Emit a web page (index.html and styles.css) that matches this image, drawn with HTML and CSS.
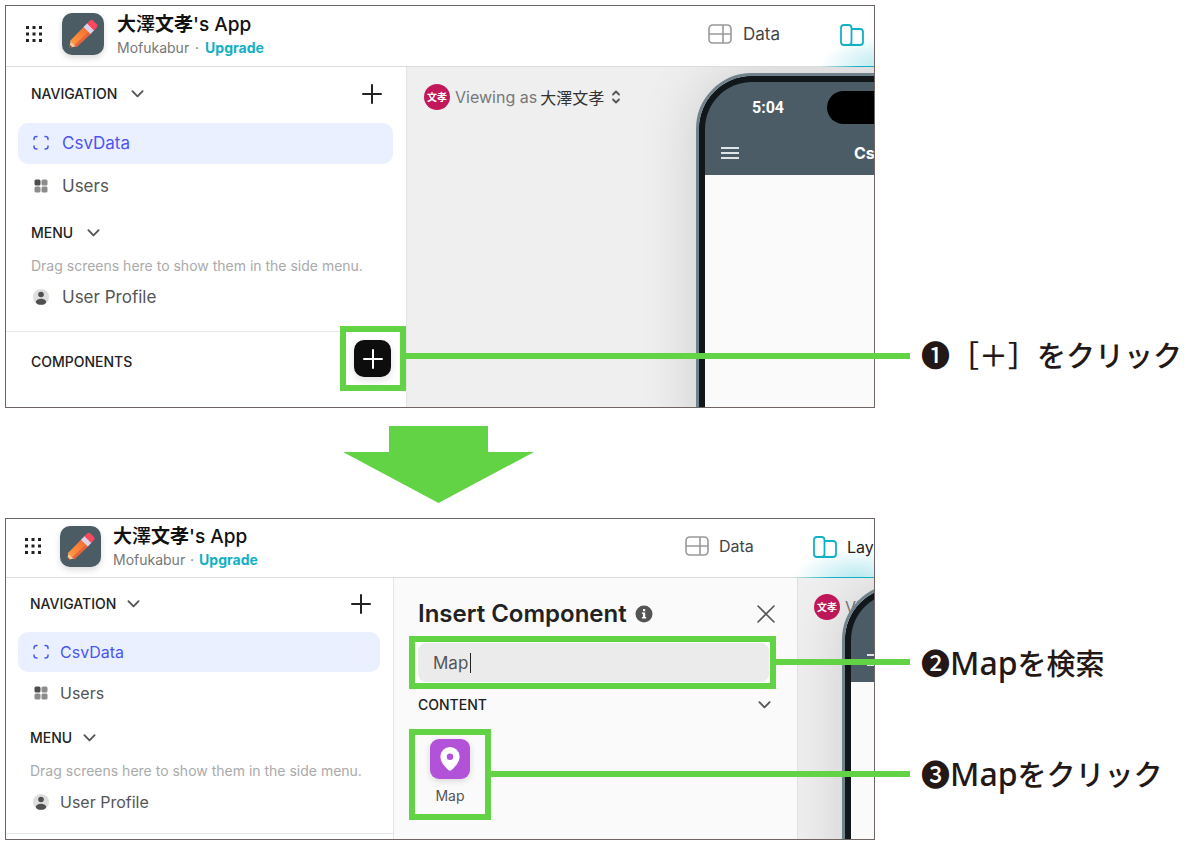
FILE: index.html
```
<!DOCTYPE html>
<html lang="ja">
<head>
<meta charset="UTF-8" />
<meta name="viewport" content="width=device-width, initial-scale=1" />
<title>Insert a Map component</title>
<link rel="stylesheet" href="styles.css">
</head>
<body>

<!-- Shared icons -->
<svg class="sprite" aria-hidden="true">
  <defs>
    <linearGradient id="pencilBody" x1="0" y1="1" x2="1" y2="0">
      <stop offset="0" stop-color="#ffa047" />
      <stop offset="1" stop-color="#f2662c" />
    </linearGradient>
  </defs>
  <symbol id="dots" viewBox="0 0 18 18">
    <path fill="#222" d="M1 1h3v3H1zM7.500 1h3v3h-3zM14 1h3v3h-3zM1 7.500h3v3H1zM7.500 7.500h3v3h-3zM14 7.500h3v3h-3zM1 14h3v3H1zM7.500 14h3v3h-3zM14 14h3v3h-3z" />
  </symbol>
  <symbol id="pencil" viewBox="0 0 42 42">
    <path fill="#f9c39b" d="M7 35l2-8 6 6z" />
    <path fill="url(#pencilBody)" d="M8 28L22.500 13l7 7L14.500 34z" />
    <path fill="#e9633a" d="M12.500 32L27.500 18l2 2L14.500 34z" />
    <path fill="#7a3d33" d="M7 35l.8-3.200 2.400 2.400z" />
    <path fill="#dcd3ea" d="M21.500 14l4-4 7 7-4 4z" />
    <path fill="#f8485e" d="M25 10.500l3-3q1.500-1.300 3 0l3.800 3.800q1.300 1.500 0 3L32 17.500z" />
  </symbol>
  <symbol id="chevron" viewBox="0 0 14 10">
    <path fill="none" stroke="#555" stroke-width="2" stroke-linecap="round" stroke-linejoin="round" d="M1.500 2L7 7.500 12.500 2" />
  </symbol>
  <symbol id="plus" viewBox="0 0 20 20">
    <path fill="none" stroke="currentColor" stroke-width="2" stroke-linecap="round" d="M10 1v18M1 10h18" />
  </symbol>
  <symbol id="brackets" viewBox="0 0 16 16">
    <path fill="none" stroke="#4a5cf0" stroke-width="1.500" stroke-linecap="round" d="M1 4.500V4q0-2.500 2.500-2.500H4M12 1.500h.5Q15 1.500 15 4v.5M15 11v.5q0 2.500-2.500 2.500H12M4 14h-.5Q1 14 1 11.500V11" />
  </symbol>
  <symbol id="tiles" viewBox="0 0 16 16">
    <rect x="1.500" y="1.500" width="6" height="6" rx="1.500" fill="#4d4d4d" />
    <rect x="8.500" y="1.500" width="6" height="6" rx="1.500" fill="#8c8c8c" />
    <rect x="1.500" y="8.500" width="6" height="6" rx="1.500" fill="#8c8c8c" />
    <rect x="8.500" y="8.500" width="6" height="6" rx="1.500" fill="#8c8c8c" />
  </symbol>
  <symbol id="person" viewBox="0 0 16 16">
    <circle cx="8" cy="8" r="8" fill="#dedede" />
    <circle cx="8" cy="5.500" r="2.800" fill="#505050" />
    <ellipse cx="8" cy="12.800" rx="5.200" ry="3" fill="#505050" />
  </symbol>
  <symbol id="table" viewBox="0 0 24 20">
    <path fill="none" stroke="#999" stroke-width="1.600" d="M5 1h14q4 0 4 4v10q0 4-4 4H5q-4 0-4-4V5q0-4 4-4zM1 10h22M15 1v18" />
  </symbol>
  <symbol id="layout" viewBox="0 0 24 22">
    <path fill="none" stroke="#12b0c4" stroke-width="1.800" d="M4 1h4.500q3 0 3 3v14q0 3-3 3H4q-3 0-3-3V4q0-3 3-3zM11.500 5h8.500q3 0 3 3v10q0 3-3 3H8" />
  </symbol>
  <symbol id="updown" viewBox="0 0 10 14">
    <path fill="none" stroke="#555" stroke-width="1.800" stroke-linecap="round" stroke-linejoin="round" d="M2 4.500l3-3 3 3M2 9.500l3 3 3-3" />
  </symbol>
  <symbol id="burger" viewBox="0 0 18 12">
    <path stroke="#dfe4e6" stroke-width="2" d="M0 1h18M0 6h18M0 11h18" />
  </symbol>
  <symbol id="info" viewBox="0 0 18 18">
    <circle cx="9" cy="9" r="8.500" fill="#555" />
    <path fill="#fff" d="M8 4h2.200v2.200H8zM7 7.500h3.200v4.500h1v1.500H7V12h1V9H7z" />
  </symbol>
  <symbol id="close" viewBox="0 0 18 18">
    <path stroke="#555" stroke-width="1.600" stroke-linecap="round" d="M1 1l16 16M17 1L1 17" />
  </symbol>
  <symbol id="pin" viewBox="0 0 20 24">
    <path fill="#fff" fill-rule="evenodd" d="M10 0a9.600 9.600 0 0 1 9.600 9.600c0 6-5 10.500-8 13.500q-1.600 1.300-3.200 0c-3-3-8-7.500-8-13.500A9.600 9.600 0 0 1 10 0zM10 6.500a3.200 3.200 0 1 0 0 6.400 3.200 3.200 0 0 0 0-6.400z" />
  </symbol>
</svg>

<main>
  <!-- Step 1 -->
  <section class="step">
    <div class="shot shot-one">
      <header class="topbar">
        <div class="brand">
          <svg class="dots"><use href="#dots" /></svg>
          <span class="logo"><svg><use href="#pencil" /></svg></span>
          <div class="brand-text">
            <div class="app-name"><b>大</b>澤<b>文孝</b>'s App</div>
            <div class="plan">Mofukabur <i>·</i> <a href="#upgrade">Upgrade</a></div>
          </div>
        </div>
        <nav class="tabs">
          <a href="#data" class="tab"><svg><use href="#table" /></svg>Data</a>
          <a href="#layout" class="tab current" aria-label="Layout"><svg><use href="#layout" /></svg></a>
        </nav>
      </header>
      <div class="workspace">
        <aside class="sidebar">
          <div class="side-head first">NAVIGATION <svg class="chev"><use href="#chevron" /></svg>
            <button class="add" aria-label="Add screen"><svg><use href="#plus" /></svg></button>
          </div>
          <a href="#csvdata" class="item active"><svg><use href="#brackets" /></svg>CsvData</a>
          <a href="#users" class="item"><svg><use href="#tiles" /></svg>Users</a>
          <div class="side-head">MENU <svg class="chev"><use href="#chevron" /></svg></div>
          <p class="hint">Drag screens here to show them in the side menu.</p>
          <a href="#profile" class="item"><svg><use href="#person" /></svg>User Profile</a>
          <div class="components">
            <span>COMPONENTS</span>
            <div class="mark mark-plus">
              <button class="insert" aria-label="Insert component"><svg><use href="#plus" /></svg></button>
            </div>
          </div>
        </aside>
        <div class="canvas">
          <div class="viewer"><span class="avatar">文孝</span>Viewing as <b>大澤文孝</b><svg><use href="#updown" /></svg></div>
          <div class="phone">
            <div class="phone-bar">
              <span class="clock">5:04</span>
              <span class="island"></span>
              <svg class="burger"><use href="#burger" /></svg>
              <span class="screen-name">CsvData</span>
            </div>
          </div>
        </div>
      </div>
    </div>
    <div class="notes">
      <p class="note note-one">❶［＋］をクリック</p>
    </div>
    <div class="lead lead-one"></div>
  </section>

  <svg class="arrow" viewBox="0 0 191 77" aria-hidden="true">
    <path fill="#61d345" d="M46 0h99v26h46L95.500 77 0 26h46z" />
  </svg>

  <!-- Steps 2 and 3 -->
  <section class="step">
    <div class="shot shot-two">
      <header class="topbar">
        <div class="brand">
          <svg class="dots"><use href="#dots" /></svg>
          <span class="logo"><svg><use href="#pencil" /></svg></span>
          <div class="brand-text">
            <div class="app-name"><b>大</b>澤<b>文孝</b>'s App</div>
            <div class="plan">Mofukabur <i>·</i> <a href="#upgrade">Upgrade</a></div>
          </div>
        </div>
        <nav class="tabs">
          <a href="#data" class="tab"><svg><use href="#table" /></svg>Data</a>
          <a href="#layout" class="tab current"><svg><use href="#layout" /></svg>Layout</a>
        </nav>
      </header>
      <div class="workspace">
        <aside class="sidebar">
          <div class="side-head first">NAVIGATION <svg class="chev"><use href="#chevron" /></svg>
            <button class="add" aria-label="Add screen"><svg><use href="#plus" /></svg></button>
          </div>
          <a href="#csvdata" class="item active"><svg><use href="#brackets" /></svg>CsvData</a>
          <a href="#users" class="item"><svg><use href="#tiles" /></svg>Users</a>
          <div class="side-head">MENU <svg class="chev"><use href="#chevron" /></svg></div>
          <p class="hint">Drag screens here to show them in the side menu.</p>
          <a href="#profile" class="item"><svg><use href="#person" /></svg>User Profile</a>
          <div class="components"></div>
        </aside>
        <div class="panel">
          <div class="panel-head">
            <h2>Insert Component</h2>
            <svg class="info"><use href="#info" /></svg>
            <button class="close" aria-label="Close"><svg><use href="#close" /></svg></button>
          </div>
          <div class="mark mark-search">
            <input type="text" value="Map" aria-label="Search components">
            <span class="caret"></span>
          </div>
          <div class="group">CONTENT <svg class="chev"><use href="#chevron" /></svg></div>
          <div class="mark mark-map">
            <button class="tile"><span class="tile-icon"><svg><use href="#pin" /></svg></span>Map</button>
          </div>
        </div>
        <div class="canvas">
          <div class="viewer"><span class="avatar">文孝</span>Viewing as</div>
          <div class="phone">
            <div class="phone-bar">
              <svg class="burger"><use href="#burger" /></svg>
            </div>
          </div>
        </div>
      </div>
    </div>
    <div class="notes">
      <p class="note note-two">❷<span>Map</span>を検索</p>
      <p class="note note-three">❸<span>Map</span>をクリック</p>
    </div>
    <div class="lead lead-two"></div>
    <div class="lead lead-three"></div>
  </section>
</main>

</body>
</html>
```
FILE: styles.css
```
* {
  box-sizing: border-box;
}
body {
  margin: 0;
  background: #fff;
  font-family: Inter, "Noto Sans CJK JP", sans-serif;
  color: #222;
}
.sprite {
  position: absolute;
  width: 0;
  height: 0;
}
main {
  padding: 5px 0 5px 5px;
}
a {
  color: inherit;
  text-decoration: none;
}
button {
  padding: 0;
  border: none;
  background: none;
  color: inherit;
  font: inherit;
  cursor: pointer;
}
svg {
  display: block;
  flex-shrink: 0;
}

/* One step: screenshot on the left, notes on the right */
.step {
  position: relative;
  display: grid;
  grid-template-columns: minmax(0, 1fr) 325px;
}
.shot {
  display: flex;
  flex-direction: column;
  border: 1px solid #6f6663;
  background: #fff;
  overflow: hidden;
  white-space: nowrap;
}
.shot-one {
  --logo: 42px;
  --row: 41px;
  --bar: 61px;
  --item-text: 17px;
  min-height: 403px;
}
.shot-two {
  --logo: 41px;
  --row: 40px;
  --bar: 59px;
  --item-text: 16px;
  min-height: 322px;
}

/* Top bar */
.topbar {
  display: flex;
  height: var(--bar);
  border-bottom: 1px solid #dcdcdc;
}
.brand {
  display: flex;
  align-items: center;
  flex: 0 0 682px;
  padding-left: 19px;
  padding-bottom: 4px;
}
.shot-two .brand {
  flex-basis: 659px;
  padding-left: 18px;
}
.dots {
  width: 18px;
  height: 18px;
}
.logo {
  width: var(--logo);
  height: var(--logo);
  margin: 0 13px 0 19px;
  border-radius: 10px;
  background: #4b5c65;
  box-shadow: 0 3px 6px rgba(0,0,0,0.14);
}
.shot-two .logo {
  margin-left: 18px;
  margin-right: 12px;
}
.logo svg {
  width: 100%;
  height: 100%;
}
.brand-text {
  padding-top: 4px;
}
.app-name {
  font-size: 19px;
  line-height: 24px;
  font-weight: 500;
  color: #111;
}
.app-name b {
  font-weight: 700;
}
.plan {
  font-size: 14px;
  line-height: 22px;
  color: #777;
}
.plan i {
  margin: 0 2px;
  font-style: normal;
}
.shot-two .plan i {
  margin: 0 1px;
}
.plan a {
  color: #14b0c4;
  font-weight: 700;
}
.tabs {
  display: flex;
}
.tab {
  display: flex;
  align-items: center;
  gap: 11px;
  width: 132px;
  flex-shrink: 0;
  padding: 0 20px 4px;
  font-size: 17px;
  color: #444;
}
.shot-two .tab {
  width: 128px;
  gap: 10px;
  font-size: 16px;
}
.tab svg {
  width: 24px;
  height: 22px;
}
.tab.current {
  margin-bottom: -1px;
  background:
    linear-gradient(90deg, transparent, #12b0c4 30%, #12b0c4 70%, transparent) 0 100% / 100% 1px no-repeat,
    radial-gradient(closest-side, #b4e8ef, transparent) 0 30px / 100% 60px no-repeat;
  color: #222;
}

/* Sidebar */
.workspace {
  display: grid;
  grid-template-columns: 401px minmax(0, 1fr);
  flex: 1;
}
.shot-two .workspace {
  grid-template-columns: 388px 403px minmax(0, 1fr);
}
.sidebar {
  border-right: 1px solid #e4e4e4;
}
.side-head {
  display: flex;
  align-items: center;
  gap: 14px;
  height: 47px;
  padding: 0 24px 0 25px;
  font-size: 14px;
  font-weight: 500;
}
.side-head.first {
  height: 53px;
  margin-bottom: 3px;
}
.shot-two .side-head {
  gap: 11px;
  padding: 0 22px 0 24px;
}
.shot-two .side-head.first {
  height: 51px;
}
.chev {
  width: 13px;
  height: 10px;
}
.add {
  margin-left: auto;
}
.add svg {
  width: 20px;
  height: 20px;
}
.item {
  display: flex;
  align-items: center;
  gap: 13px;
  height: var(--row);
  margin: 0 13px 2px 12px;
  padding: 0 0 1px 15px;
  border-radius: 10px;
  font-size: var(--item-text);
  color: #555;
}
.shot-two .item {
  gap: 11px;
  margin-bottom: 1px;
}
.item svg {
  width: 16px;
  height: 16px;
}
.item.active {
  background: #eaf0ff;
  color: #4a55f0;
}
.hint {
  margin: 0 0 2px;
  padding-left: 25px;
  font-size: 14px;
  line-height: 19px;
  color: #aaa;
}
.shot-two .hint {
  padding-left: 24px;
}
.components {
  display: flex;
  justify-content: space-between;
  margin-top: 13px;
  border-top: 1px solid #e8e8e8;
  padding-left: 25px;
  font-size: 14px;
  font-weight: 500;
  line-height: 60px;
}
.shot-two .components {
  margin-top: 11px;
}

/* Green markers */
.mark {
  border: 6px solid #61d345;
}
.mark-plus {
  position: relative;
  width: 66px;
  height: 65px;
  margin-top: -6px;
  padding: 8px;
  background: #fff;
}
.insert {
  display: flex;
  align-items: center;
  justify-content: center;
  width: 37px;
  height: 37px;
  border-radius: 10px;
  background: #0d0d0d;
  color: #fff;
  box-shadow: 0 3px 8px rgba(0,0,0,0.12);
}
.insert svg {
  width: 20px;
  height: 20px;
}
.lead {
  position: absolute;
  right: 290px;
  height: 6px;
  background: #61d345;
}
.lead-one {
  top: 348px;
  left: 400px;
}
.lead-two {
  top: 141px;
  left: 770px;
}
.lead-three {
  top: 253px;
  left: 485px;
}

/* Canvas with the phone preview */
.canvas {
  position: relative;
  overflow: hidden;
  background: #efefef;
}
.shot-two .canvas {
  border-left: 1px solid #e0e0e0;
}
.viewer {
  display: flex;
  align-items: center;
  gap: 5px;
  padding: 17px 17px 0;
  font-size: 16px;
  color: #777;
}
.viewer b {
  margin-left: -2px;
  font-weight: 400;
  color: #333;
}
.viewer svg {
  width: 10px;
  height: 14px;
  margin-left: 2px;
}
.avatar {
  flex-shrink: 0;
  width: 26px;
  height: 26px;
  border-radius: 50%;
  background: #c2185b;
  color: #fff;
  font-size: 10px;
  font-weight: 700;
  line-height: 26px;
  text-align: center;
}
.phone {
  position: absolute;
  top: 6px;
  left: 289px;
  width: 400px;
  height: 800px;
  border: 3px solid #70828b;
  border-radius: 56px;
  background: #fafafa;
  box-shadow: inset 0 0 0 6px #11171a, 0 0 60px rgba(0,0,0,0.14);
  overflow: hidden;
}
.shot-two .viewer {
  padding: 16px 16px 0;
}
.shot-two .phone {
  left: 44px;
}
.phone-bar {
  position: relative;
  height: 99px;
  border: 6px solid #11171a;
  border-bottom: none;
  border-radius: 53px 53px 0 0;
  background: #4b5c66;
  color: #fff;
}
.shot-two .phone-bar {
  height: 95px;
}
.clock {
  position: absolute;
  top: 16px;
  left: 47px;
  font-family: Roboto, sans-serif;
  font-size: 16px;
  line-height: 20px;
  font-weight: 700;
}
.island {
  position: absolute;
  top: 9px;
  left: 122px;
  width: 120px;
  height: 33px;
  border-radius: 17px;
  background: #000;
}
.burger {
  position: absolute;
  bottom: 16px;
  left: 16px;
  width: 18px;
  height: 12px;
}
.screen-name {
  position: absolute;
  bottom: 12px;
  left: 149px;
  font-size: 16px;
  line-height: 20px;
  font-weight: 700;
}

/* Insert panel */
.panel {
  padding: 0 21px 0 15px;
  background: #fafafa;
}
.panel-head {
  display: flex;
  align-items: center;
  gap: 8px;
  padding: 21px 1px 7px 9px;
}
.panel-head h2 {
  margin: 0;
  font-size: 24px;
  line-height: 30px;
  font-weight: 600;
}
.info {
  width: 18px;
  height: 18px;
}
.close {
  margin-left: auto;
}
.close svg {
  width: 18px;
  height: 18px;
}
.mark-search {
  position: relative;
  padding: 1px 1px 1px 3px;
  background: #fff;
}
.mark-search input {
  display: block;
  width: 100%;
  height: 39px;
  border: none;
  outline: none;
  border-radius: 8px;
  padding: 0 15px;
  background: #ebebeb;
  color: #555;
  font: 17px Inter, sans-serif;
}
.caret {
  position: absolute;
  top: 11px;
  left: 55px;
  width: 1px;
  height: 20px;
  background: #222;
}
.group {
  display: flex;
  align-items: center;
  justify-content: space-between;
  padding: 0 5px 0 9px;
  font-size: 14px;
  line-height: 32px;
  font-weight: 500;
  margin-bottom: 8px;
}
.mark-map {
  width: 82px;
  height: 91px;
}
.tile {
  display: flex;
  flex-direction: column;
  align-items: center;
  width: 100%;
  padding-top: 4px;
  font-size: 14px;
  line-height: 34px;
  color: #555;
}
.tile-icon {
  display: flex;
  align-items: center;
  justify-content: center;
  width: 40px;
  height: 40px;
  border-radius: 9px;
  background: #b152d9;
  box-shadow: 0 2px 6px rgba(0,0,0,0.14);
}
.tile-icon svg {
  width: 20px;
  height: 24px;
}

/* Notes */
.notes {
  padding-left: 46px;
}
.note {
  margin: 0;
  font-family: "Noto Sans CJK JP", sans-serif;
  font-size: 29px;
  line-height: 40px;
  font-weight: 500;
  color: #231815;
  white-space: nowrap;
}
.note span {
  font-family: "Noto Sans", sans-serif;
  font-size: 32px;
}
.note-one {
  margin-top: 329px;
}
.note-two {
  margin-top: 124px;
}
.note-three {
  margin-top: 70px;
}

.arrow {
  width: 191px;
  height: 77px;
  margin: 18px 0 15px 338px;
}
```
